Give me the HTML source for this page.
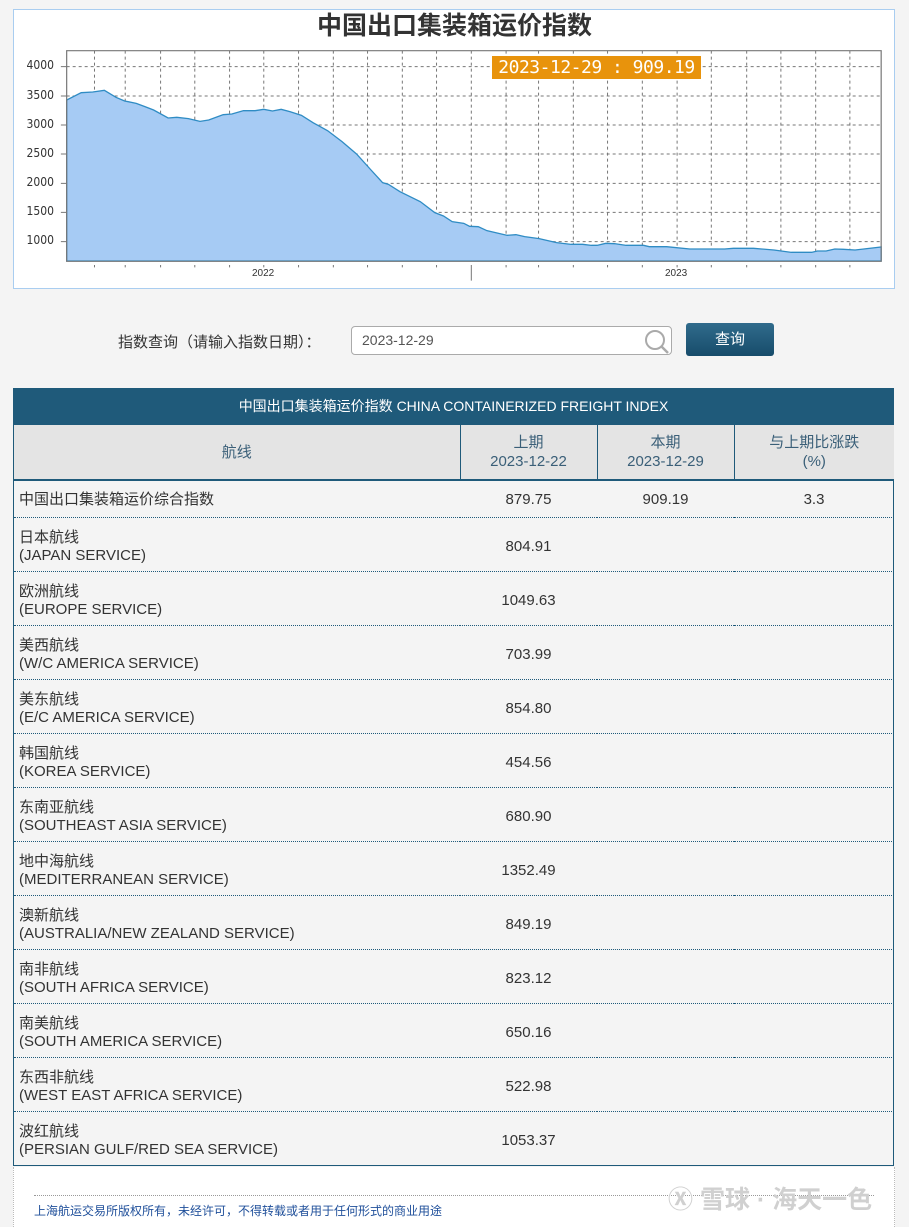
<!DOCTYPE html>
<html><head><meta charset="utf-8">
<style>
*{margin:0;padding:0;box-sizing:border-box}
body{width:909px;height:1227px;background:#f4f4f4;font-family:"Liberation Sans","Noto Sans CJK SC",sans-serif;position:relative;overflow:hidden;color:#333}
.abs{position:absolute}
#chart{left:13px;top:9px;width:882px;height:280px;background:#fff;border:1px solid #a9cdf0}
.yl{position:absolute;left:10px;width:44px;text-align:right;font-size:12px;color:#333;font-family:"DejaVu Sans Condensed","Liberation Sans",sans-serif}
table{border-collapse:collapse;position:absolute;left:14px;top:425px;width:880px;font-size:15px;table-layout:fixed}
td{height:54px;padding:5px 0 0 5px;line-height:18px;border-bottom:1px dotted #1f5a7a;vertical-align:middle;color:#333;overflow:hidden}
tr.f td{height:37px;padding-top:3px}
td.n{text-align:center;padding-left:0}
th{background:#e4e4e4;font-weight:normal;color:#3a5f78;height:55px;border-right:1px solid #1f5a7a;border-bottom:2px solid #1f5a7a;line-height:19px;font-size:15px}
</style></head><body>
<div id="chart" class="abs"></div>
<div class="abs" style="left:0;top:8px;width:909px;text-align:center;font-size:25px;font-weight:bold;color:#333;font-family:'Noto Sans CJK SC','Liberation Sans',sans-serif;line-height:32px">中国出口集装箱运价指数</div>
<svg class="abs" style="left:0;top:0" width="909" height="300" viewBox="0 0 1568 900" preserveAspectRatio="none">
<g stroke="#777" stroke-dasharray="3 3" stroke-width="1">
<path vector-effect="non-scaling-stroke" d="M115 200H1520M115 288H1520M115 375H1520M115 462H1520M115 550H1520M115 637H1520M115 725H1520"/>
<path vector-effect="non-scaling-stroke" d="M163 152V783M216 152V783M277 152V783M336 152V783M396 152V783M455 152V783M515 152V783M575 152V783M634 152V783M694 152V783M753 152V783M813 152V783M873 152V783M929 152V783M989 152V783M1048 152V783M1108 152V783M1168 152V783M1227 152V783M1288 152V783M1347 152V783M1407 152V783M1466 152V783"/>
</g>
<path fill="#a6cbf4" stroke="#2f8cc4" stroke-width="1.3" vector-effect="non-scaling-stroke" d="M115 783L115 300L140 278L160 276L180 271L200 292L215 303L235 310L250 320L265 330L290 354L305 352L325 356L345 364L360 360L385 344L400 342L420 332L440 332L455 328L470 333L485 328L500 335L520 346L540 368L565 392L590 425L615 462L640 510L660 548L670 553L690 575L725 605L750 638L765 648L780 665L800 670L810 679L825 680L840 692L875 706L890 704L905 710L930 716L960 728L985 733L1005 733L1020 736L1030 736L1045 730L1060 731L1080 736L1110 736L1120 740L1150 740L1190 747L1250 747L1265 745L1300 745L1335 750L1365 757L1400 757L1410 753L1425 753L1440 747L1455 748L1475 750L1490 747L1520 741L1520 783Z"/>
<rect x="115" y="152" width="1405" height="632" fill="none" stroke="#777" stroke-width="1.2" vector-effect="non-scaling-stroke"/>
<g stroke="#777" stroke-width="1">
<path vector-effect="non-scaling-stroke" d="M105 200H115M105 288H115M105 375H115M105 462H115M105 550H115M105 637H115M105 725H115"/>
<path vector-effect="non-scaling-stroke" d="M163 795V802M216 795V802M277 795V802M336 795V802M396 795V802M455 795V802M515 795V802M575 795V802M634 795V802M694 795V802M753 795V802M813 795V842M873 795V802M929 795V802M989 795V802M1048 795V802M1108 795V802M1168 795V802M1227 795V802M1288 795V802M1347 795V802M1407 795V802M1466 795V802"/>
</g>
</svg>
<div class="yl" style="top:58px">4000</div>
<div class="yl" style="top:88px">3500</div>
<div class="yl" style="top:117px">3000</div>
<div class="yl" style="top:146px">2500</div>
<div class="yl" style="top:175px">2000</div>
<div class="yl" style="top:204px">1500</div>
<div class="yl" style="top:233px">1000</div>
<div class="abs" style="left:252px;top:268px;font-size:10px">2022</div>
<div class="abs" style="left:665px;top:268px;font-size:10px">2023</div>
<div class="abs" style="left:492px;top:56px;width:209px;height:23px;background:#e8930c;color:#fff;font-size:18px;line-height:23px;text-align:center;font-family:'DejaVu Sans Mono','Liberation Mono',monospace;letter-spacing:-0.5px">2023-12-29 : 909.19</div>

<div class="abs" style="left:118px;top:331px;font-size:15px">指数查询（请输入指数日期）：</div>
<div class="abs" style="left:351px;top:326px;width:321px;height:29px;background:#fff;border:1px solid #aaa;border-radius:4px;font-size:14px;line-height:27px;padding-left:10px;color:#555">2023-12-29</div>
<svg class="abs" style="left:643px;top:328px" width="28" height="26"><circle cx="12" cy="12" r="9" fill="none" stroke="#aaa" stroke-width="2"/><path d="M18 18L25 25" stroke="#aaa" stroke-width="2.5"/></svg>
<div class="abs" style="left:686px;top:323px;width:88px;height:33px;border-radius:3px;background:linear-gradient(#306b8c,#174c6b);color:#fff;font-size:15px;text-align:center;line-height:33px">查询</div>

<div class="abs" style="left:13px;top:388px;width:881px;height:37px;background:#1f5a7a;color:#fff;font-size:14px;text-align:center;line-height:36px">中国出口集装箱运价指数 CHINA CONTAINERIZED FREIGHT INDEX</div>
<div class="abs" style="left:13px;top:425px;width:881px;height:741px;border:1px solid #1f5a7a;border-top:none;background:#f4f4f4"></div>
<table>
<colgroup><col style="width:446px"><col style="width:137px"><col style="width:137px"><col style="width:160px"></colgroup>
<tr><th>航线</th><th>上期<br>2023-12-22</th><th>本期<br>2023-12-29</th><th style="border-right:none">与上期比涨跌<br>(%)</th></tr>
<tr class="f"><td>中国出口集装箱运价综合指数</td><td class="n">879.75</td><td class="n">909.19</td><td class="n">3.3</td></tr>
<tr><td>日本航线<br>(JAPAN SERVICE)</td><td class="n">804.91</td><td></td><td></td></tr>
<tr><td>欧洲航线<br>(EUROPE SERVICE)</td><td class="n">1049.63</td><td></td><td></td></tr>
<tr><td>美西航线<br>(W/C AMERICA SERVICE)</td><td class="n">703.99</td><td></td><td></td></tr>
<tr><td>美东航线<br>(E/C AMERICA SERVICE)</td><td class="n">854.80</td><td></td><td></td></tr>
<tr><td>韩国航线<br>(KOREA SERVICE)</td><td class="n">454.56</td><td></td><td></td></tr>
<tr><td>东南亚航线<br>(SOUTHEAST ASIA SERVICE)</td><td class="n">680.90</td><td></td><td></td></tr>
<tr><td>地中海航线<br>(MEDITERRANEAN SERVICE)</td><td class="n">1352.49</td><td></td><td></td></tr>
<tr><td>澳新航线<br>(AUSTRALIA/NEW ZEALAND SERVICE)</td><td class="n">849.19</td><td></td><td></td></tr>
<tr><td>南非航线<br>(SOUTH AFRICA SERVICE)</td><td class="n">823.12</td><td></td><td></td></tr>
<tr><td>南美航线<br>(SOUTH AMERICA SERVICE)</td><td class="n">650.16</td><td></td><td></td></tr>
<tr><td>东西非航线<br>(WEST EAST AFRICA SERVICE)</td><td class="n">522.98</td><td></td><td></td></tr>
<tr><td style="border-bottom:none">波红航线<br>(PERSIAN GULF/RED SEA SERVICE)</td><td class="n" style="border-bottom:none">1053.37</td><td style="border-bottom:none"></td><td style="border-bottom:none"></td></tr>
</table>
<div class="abs" style="left:13px;top:1167px;width:882px;height:60px;background:#fff;border-left:1px dotted #bbb;border-right:1px dotted #bbb"></div>
<div class="abs" style="left:34px;top:1195px;width:840px;border-top:1px dotted #999"></div>
<div class="abs" style="left:34px;top:1202px;font-size:12px;color:#1f4f9a">上海航运交易所版权所有，未经许可，不得转载或者用于任何形式的商业用途</div>
<div class="abs" style="left:668px;top:1180px;font-size:25px;color:#d0d0d0;font-weight:bold">Ⓧ 雪球 · 海天一色</div>
</body></html>
